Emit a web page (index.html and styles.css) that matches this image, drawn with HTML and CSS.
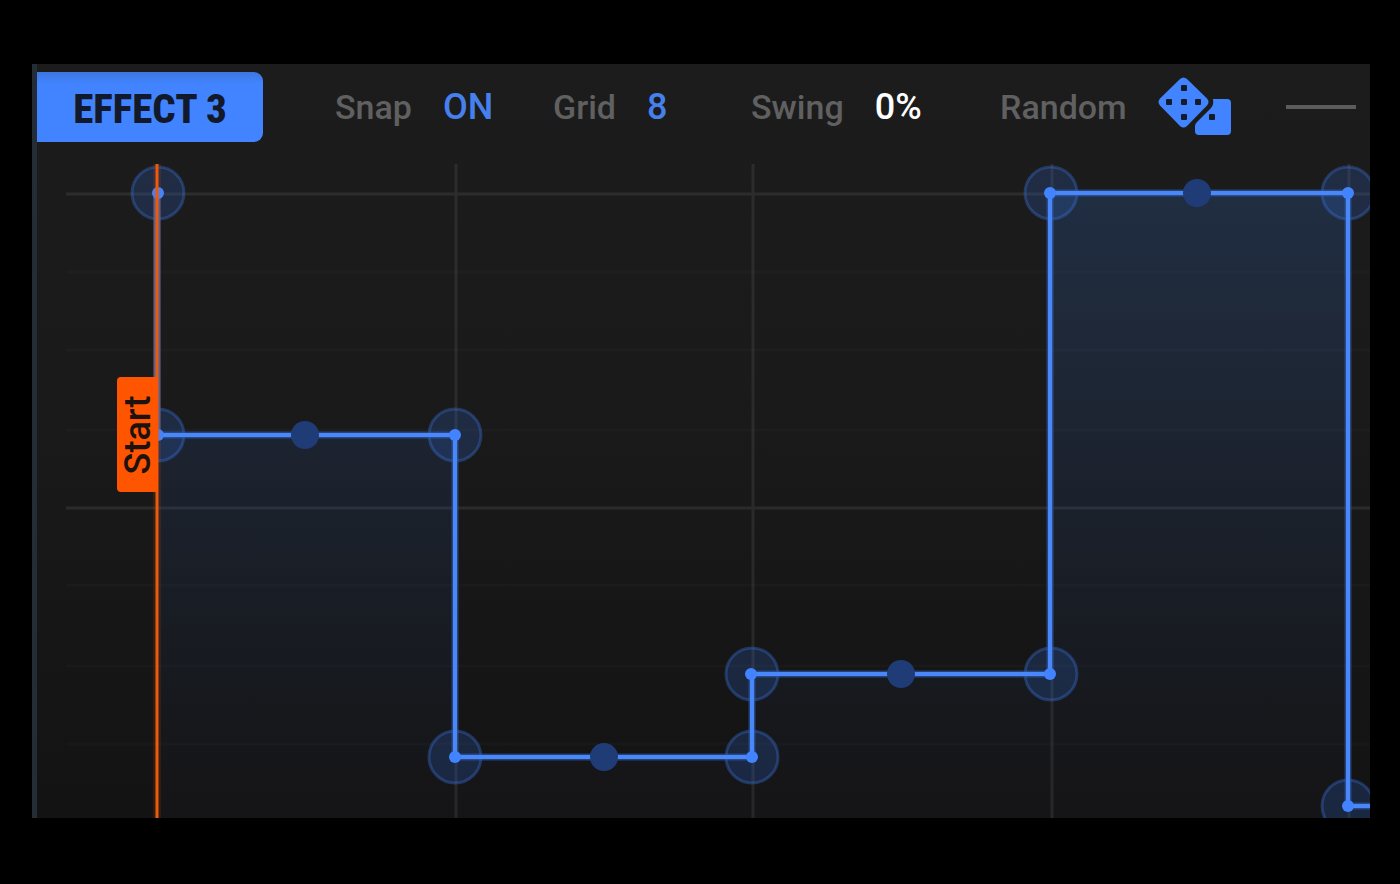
FILE: index.html
```html
<!DOCTYPE html>
<html lang="en">
<head>
<meta charset="utf-8">
<title>Effect 3</title>
<link rel="stylesheet" href="styles.css">
</head>
<body>
<main class="panel">
  <header class="toolbar">
    <div><button class="tab" type="button">EFFECT 3</button></div>
    <div class="setting"><span id="snap">Snap</span><button class="value" type="button" aria-labelledby="snap">ON</button></div>
    <div class="setting"><span id="grid">Grid</span><button class="value" type="button" aria-labelledby="grid">8</button></div>
    <div class="setting"><span id="swing">Swing</span><button class="value value-plain" type="button" aria-labelledby="swing">0%</button></div>
    <div class="setting"><span id="random">Random</span>
      <button class="value dice" type="button" aria-labelledby="random">
        <svg width="74" height="60" viewBox="0 0 74 60" fill="#4284ff">
          <path d="M22 2Q25.500-1 29 2L49 21.500Q52 25 49 28.500L29 49Q25.500 52 22 49L2 28.500Q-1 25 2 21.500Z"/>
          <path d="M55 22H69Q73 22 73 26V54Q73 58 69 58H41Q37 58 37 54V49Q37 47 39 45L53 31Q56 28 55 22Z"/>
          <g fill="#151b28">
            <rect x="23" y="8" width="6" height="6" rx="1"/>
            <rect x="8" y="22" width="6" height="6" rx="1"/>
            <rect x="23" y="22" width="6" height="6" rx="1"/>
            <rect x="37" y="22" width="6" height="6" rx="1"/>
            <rect x="23" y="37" width="6" height="6" rx="1"/>
            <rect x="51" y="37" width="6" height="6" rx="1"/>
          </g>
        </svg>
      </button>
    </div>
    <div class="dash"></div>
  </header>
  <svg class="chart" viewBox="37 142 1333 676" role="img" aria-label="Step envelope">
    <defs>
      <linearGradient id="fill" gradientUnits="userSpaceOnUse" x1="0" y1="193" x2="0" y2="818">
        <stop offset="0" stop-color="#2f69bd" stop-opacity=".24"/>
        <stop offset=".4" stop-color="#2f62bd" stop-opacity=".14"/>
        <stop offset=".8" stop-color="#2d5fbd" stop-opacity=".05"/>
        <stop offset="1" stop-color="#6d5fbd" stop-opacity=".02"/>
      </linearGradient>
    </defs>
    <g class="grid-minor">
      <path d="M66 272H1370M66 350H1370M66 430H1370M66 585H1370M66 666H1370M66 744H1370"/>
    </g>
    <g class="grid-major">
      <path d="M66 194H1370M66 508H1370M456 164V818M753 164V818M1052 164V818M1349 164V818"/>
    </g>
    <path fill="url(#fill)" d="M157 435H455V757H752V674H1050V193H1348V806H1370V818H157Z"/>
    <g class="handle">
      <circle cx="158" cy="193" r="26"/><circle cx="158" cy="435" r="26"/>
      <circle cx="455" cy="435" r="26"/><circle cx="455" cy="757" r="26"/>
      <circle cx="752" cy="757" r="26"/><circle cx="752" cy="674" r="26"/>
      <circle cx="1051" cy="674" r="26"/><circle cx="1051" cy="193" r="26"/>
      <circle cx="1348" cy="193" r="26"/><circle cx="1348" cy="806" r="26"/>
    </g>
    <g class="curve">
      <path class="curve-glow" d="M158 435H455V757H752V674H1050V193H1348V806H1370"/>
      <path class="curve-core" d="M158 435H455V757H752V674H1050V193H1348V806H1370"/>
    </g>
    <path class="curve-lead" d="M157 193V435"/>
    <g fill="#4284ff">
      <circle cx="158" cy="193" r="6"/><circle cx="158" cy="435" r="6"/>
      <circle cx="455" cy="435" r="6"/><circle cx="455" cy="757" r="6"/>
      <circle cx="752" cy="757" r="6"/><circle cx="751" cy="674" r="6"/>
      <circle cx="1050" cy="674" r="6"/><circle cx="1050" cy="193" r="6"/>
      <circle cx="1348" cy="193" r="6"/><circle cx="1348" cy="806" r="6"/>
    </g>
    <g fill="#203c77">
      <circle cx="305" cy="435" r="14"/><circle cx="604" cy="757" r="14"/>
      <circle cx="901" cy="674" r="14"/><circle cx="1197" cy="193" r="14"/>
    </g>
    <path class="start-glow" d="M157 164V818"/>
    <path class="start-line" d="M157 164V818"/>
    <path fill="#ff5500" d="M158 377H121Q117 377 117 381V488Q117 492 121 492H158Z"/>
    <text class="start-text" transform="translate(150 435) rotate(-90)">Start</text>
  </svg>
</main>
</body>
</html>
```
FILE: styles.css
```css
body {
  margin: 0;
  padding: 64px 30px 66px 32px;
  background: #000;
  font-family: Roboto, "Liberation Sans", sans-serif;
}
.panel {
  border-left: 5px solid #242d36;
  background: linear-gradient(#1c1c1c, #1a1a1a 45%, #131313);
}
.toolbar {
  display: grid;
  grid-template-columns: 298fr 218fr 198fr 249fr 286fr 84fr;
  align-items: center;
  height: 70px;
  padding-top: 8px;
}
.tab {
  display: block;
  width: 226px;
  height: 70px;
  padding: 4px 0 0;
  border: 0;
  border-radius: 0 9px 9px 0;
  background: linear-gradient(#3d76e0, #4284ff 12px);
  color: #11192a;
  font: 800 41px "Roboto Condensed", "Liberation Sans Narrow", Roboto, sans-serif;
  white-space: nowrap;
}
.setting {
  display: flex;
  align-items: center;
  gap: 31px;
  color: #606060;
  font-size: 34px;
  font-weight: 500;
  line-height: 40px;
}
.value {
  padding: 0;
  border: 0;
  background: none;
  color: #4580ec;
  font: 500 36px/40px Roboto, "Liberation Sans", sans-serif;
}
.value-plain {
  color: #fff;
}
.dice {
  height: 60px;
}
.dice svg {
  display: block;
}
.dash {
  height: 4px;
  margin-right: 14px;
  background: #5c5c5c;
}
.chart {
  display: block;
  width: 100%;
  height: auto;
}
.grid-minor {
  stroke: #fff;
  stroke-opacity: .02;
  stroke-width: 3;
}
.grid-major {
  stroke: #fff;
  stroke-opacity: .08;
  stroke-width: 3;
}
.handle {
  fill: #2d64c8;
  fill-opacity: .24;
  stroke: #3a72dc;
  stroke-opacity: .36;
  stroke-width: 3;
}
.curve {
  fill: none;
}
.curve-glow {
  stroke: #2f5fb8;
  stroke-opacity: .6;
  stroke-width: 7;
}
.curve-core {
  stroke: #4a88fa;
  stroke-width: 4;
}
.curve-lead {
  stroke: #45639f;
  stroke-width: 7;
}
.start-glow {
  stroke: #ff5500;
  stroke-opacity: .12;
  stroke-width: 8;
}
.start-line {
  stroke: #ec5a0c;
  stroke-width: 3;
}
.start-text {
  fill: #1c1210;
  font-size: 36px;
  font-weight: 500;
  text-anchor: middle;
}
```
